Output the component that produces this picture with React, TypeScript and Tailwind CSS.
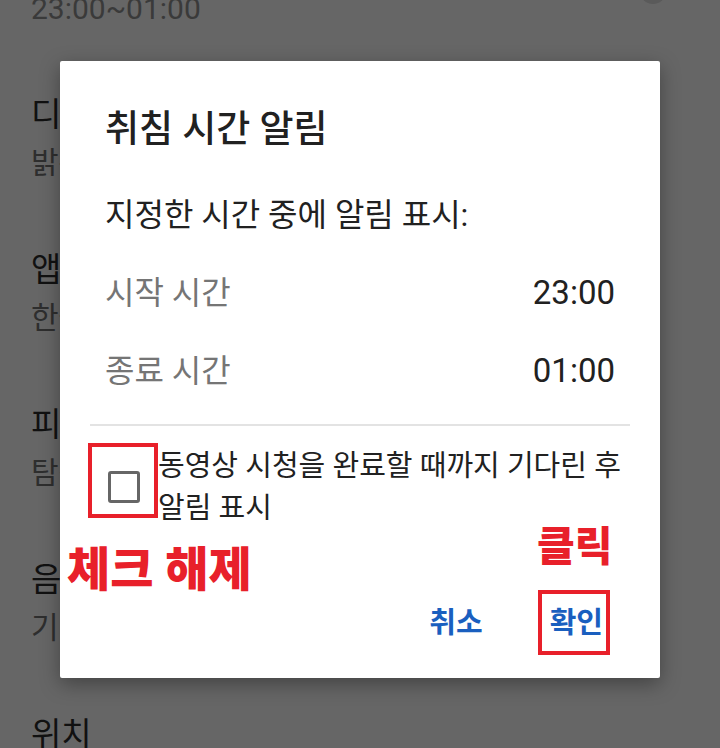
import React from "react";

const bgItems: [string, string | null][] = [
  ["디자인", "밝은 테마"],
  ["앱 언어", "한국어"],
  ["피드에서 재생", "탐색하는 동안 Wi-Fi에서만"],
  ["음성 검색 언어", "기기 언어"],
  ["위치", null],
];

export default function App() {
  return (
    <div className="relative w-[720px] h-[748px] overflow-hidden bg-[#666666] font-['Roboto','Noto_Sans_CJK_KR',sans-serif]">
      {/* background settings list (dimmed) */}
      <div className="flex flex-col pl-[31px] mt-[-11px]">
        <div className="h-[40px] leading-[40px] text-[30px] text-[#3a3a3a]">23:00~01:00</div>
        {bgItems.map(([t, s], i) => (
          <div key={i} className={i === 0 ? "mt-[66px]" : "mt-[67px]"}>
            <div className="h-[40px] leading-[40px] text-[33px] text-[#111111] whitespace-nowrap">{t}</div>
            {s && (
              <div className="mt-[8px] h-[40px] leading-[40px] text-[30px] text-[#2e2e2e] whitespace-nowrap">{s}</div>
            )}
          </div>
        ))}
      </div>
      {/* knob at top right */}
      <div className="absolute left-[640px] top-[-22px] w-[26px] h-[26px] rounded-full bg-[#5a5a5a]" />

      {/* dialog */}
      <div className="absolute left-[60px] top-[61px] w-[600px] h-[617px] bg-white rounded-[2px] shadow-[0_6px_20px_rgba(0,0,0,0.35)] flex flex-col">
        <div className="pt-[45px] px-[45px] text-[37px] font-medium leading-[48px] text-[#212121]">취침 시간 알림</div>
        <div className="mt-[41px] px-[45px] text-[32px] leading-[40px] text-[#212121]">지정한 시간 중에 알림 표시:</div>
        <div className="mt-[19px] px-[45px] h-[78px] flex items-center justify-between">
          <span className="text-[32px] text-[#757575]">시작 시간</span>
          <span className="text-[33px] text-[#212121]">23:00</span>
        </div>
        <div className="px-[45px] h-[78px] flex items-center justify-between">
          <span className="text-[32px] text-[#757575]">종료 시간</span>
          <span className="text-[33px] text-[#212121]">01:00</span>
        </div>
        <div className="mt-[14px] mx-[30px] h-[2px] bg-[#e3e3e3]" />
        <div className="mt-[19px] pl-[30px] pr-[30px] flex items-center">
          <div className="w-[68px] shrink-0 flex items-center justify-center">
            <div className="w-[32px] h-[32px] border-[3px] border-[#666666] rounded-[3px]" />
          </div>
          <div className="text-[29px] leading-[42px] text-[#212121] whitespace-nowrap">
            동영상 시청을 완료할 때까지 기다린 후
            <br />
            알림 표시
          </div>
        </div>
        <div className="mt-[70px] flex justify-end items-center gap-[67px] pr-[57px]">
          <span className="text-[29px] font-bold leading-[48px] text-[#1a5fbf]">취소</span>
          <span className="text-[29px] font-bold leading-[48px] text-[#1a5fbf]">확인</span>
        </div>
      </div>

      {/* annotations */}
      <div className="absolute left-[88px] top-[443px] w-[70px] h-[75px] border-[4px] border-[#e8202a]" />
      <div className="absolute left-[538px] top-[590px] w-[72px] h-[65px] border-[4px] border-[#e8202a]" />
      <div className="absolute left-[67px] top-[540px] text-[47px] leading-[60px] font-black text-[#e8202a] whitespace-nowrap">체크 해제</div>
      <div className="absolute left-[537px] top-[520px] text-[41px] leading-[54px] font-black text-[#e8202a] whitespace-nowrap">클릭</div>
    </div>
  );
}
